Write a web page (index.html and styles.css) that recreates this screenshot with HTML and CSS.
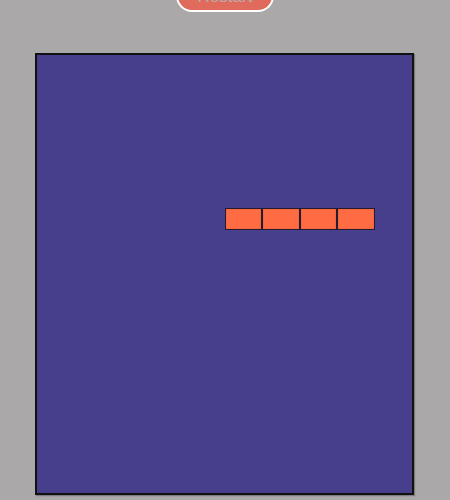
FILE: index.html
```html
<!DOCTYPE html>
<html>
<head>
<meta charset="utf-8">
<link rel="stylesheet" href="styles.css">
</head>
<body>
<div class="page">
  <button class="restart">Restart</button>
  <div class="board">
    <div class="seg" style="grid-column: 6; grid-row: 8;"></div>
    <div class="seg" style="grid-column: 7; grid-row: 8;"></div>
    <div class="seg" style="grid-column: 8; grid-row: 8;"></div>
    <div class="seg" style="grid-column: 9; grid-row: 8;"></div>
  </div>
</div>
</body>
</html>
```
FILE: styles.css
```css
html, body {
  margin: 0;
  padding: 0;
  background: #aaa8a9;
  overflow: hidden;
}
.page {
  display: flex;
  flex-direction: column;
  align-items: center;
  width: 450px;
  height: 500px;
}
.restart {
  margin-top: -20px;
  padding: 2px 20px 0;
  height: 32px;
  font-family: "Liberation Sans", Arial, sans-serif;
  font-size: 17px;
  color: #b9acaa;
  background: #e06a5b;
  border: 2px solid #ffffff;
  border-radius: 16px;
  line-height: 18px;
}
.board {
  margin-top: 41px;
  margin-left: -1px;
  width: 375px;
  height: 438px;
  border: 2px solid #111111;
  background: #483f8c;
  display: grid;
  grid-template-columns: repeat(10, 1fr);
  grid-template-rows: repeat(20, 1fr);
  box-shadow: 1px 1px 1px rgba(0,0,0,0.25);
}
.seg {
  background: #ff6b42;
  border: 1px solid #241c30;
  box-shadow: inset 0 0 1px rgba(0,0,0,0.4);
  box-sizing: border-box;
}
```
